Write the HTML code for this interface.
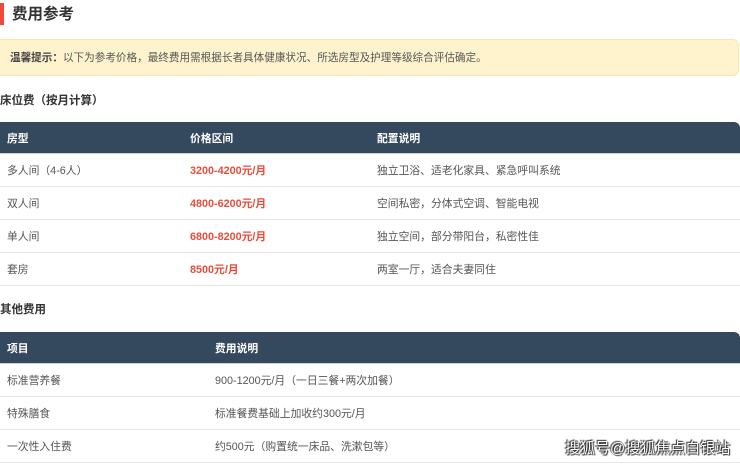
<!DOCTYPE html>
<html><head><meta charset="utf-8"><style>
*{margin:0;padding:0;box-sizing:border-box}
body{width:740px;height:465px;overflow:hidden;background:#fff;position:relative;font-family:"Liberation Sans","Noto Sans CJK SC",sans-serif;color:#444}
.a{position:absolute;white-space:nowrap}
.bar{left:0;top:3px;width:4px;height:22px;background:#e74c3c}
.title{left:12px;top:4px;font-size:15.5px;line-height:22px;font-weight:bold;color:#333}
.note{left:-6px;top:39px;width:745px;height:37px;background:#fef3cd;border:1px solid #fbe6ad;border-radius:6px}
.notet{left:10px;top:51px;font-size:10.6px;line-height:14px;color:#555}
.h3{left:0;font-size:11.5px;font-weight:bold;color:#333;line-height:16px}
.tbl{position:absolute;left:-6px;width:746px;border-radius:6px 6px 0 0;overflow:hidden}
.hd{height:32px;background:#34495e;color:#fff;font-weight:bold;font-size:10.8px;position:relative;border-bottom:1px solid #c8cfd6}
.row{height:33px;border-bottom:1.5px solid #e6e6e6;position:relative;font-size:10.8px;color:#555}
.c{position:absolute;top:1px;line-height:32px;white-space:nowrap}
.red{color:#e74c3c;font-weight:bold}
.wm{left:565px;top:440px;font-size:15px;line-height:18px;color:#fff;text-shadow:0 0 1px #222,1px 1px 1px #222,-1px -1px 1px #222}
</style></head><body>
<div class="a bar"></div>
<div class="a title">费用参考</div>
<div class="a note"></div>
<div class="a notet"><b style="color:#444">温馨提示：</b>以下为参考价格，最终费用需根据长者具体健康状况、所选房型及护理等级综合评估确定。</div>
<div class="a h3" style="top:93px">床位费（按月计算）</div>
<div class="tbl" style="top:122px">
<div class="hd"><span class="c" style="left:13px">房型</span><span class="c" style="left:196px">价格区间</span><span class="c" style="left:383px">配置说明</span></div>
<div class="row"><span class="c" style="left:13px">多人间（4-6人）</span><span class="c red" style="left:196px">3200-4200元/月</span><span class="c" style="left:383px">独立卫浴、适老化家具、紧急呼叫系统</span></div>
<div class="row"><span class="c" style="left:13px">双人间</span><span class="c red" style="left:196px">4800-6200元/月</span><span class="c" style="left:383px">空间私密，分体式空调、智能电视</span></div>
<div class="row"><span class="c" style="left:13px">单人间</span><span class="c red" style="left:196px">6800-8200元/月</span><span class="c" style="left:383px">独立空间，部分带阳台，私密性佳</span></div>
<div class="row"><span class="c" style="left:13px">套房</span><span class="c red" style="left:196px">8500元/月</span><span class="c" style="left:383px">两室一厅，适合夫妻同住</span></div>
</div>
<div class="a h3" style="top:302px">其他费用</div>
<div class="tbl" style="top:332px">
<div class="hd"><span class="c" style="left:13px">项目</span><span class="c" style="left:221px">费用说明</span></div>
<div class="row"><span class="c" style="left:13px">标准营养餐</span><span class="c" style="left:221px">900-1200元/月（一日三餐+两次加餐）</span></div>
<div class="row"><span class="c" style="left:13px">特殊膳食</span><span class="c" style="left:221px">标准餐费基础上加收约300元/月</span></div>
<div class="row"><span class="c" style="left:13px">一次性入住费</span><span class="c" style="left:221px">约500元（购置统一床品、洗漱包等）</span></div>
</div>
<div class="a wm">搜狐号@搜狐焦点白银站</div>
</body></html>
